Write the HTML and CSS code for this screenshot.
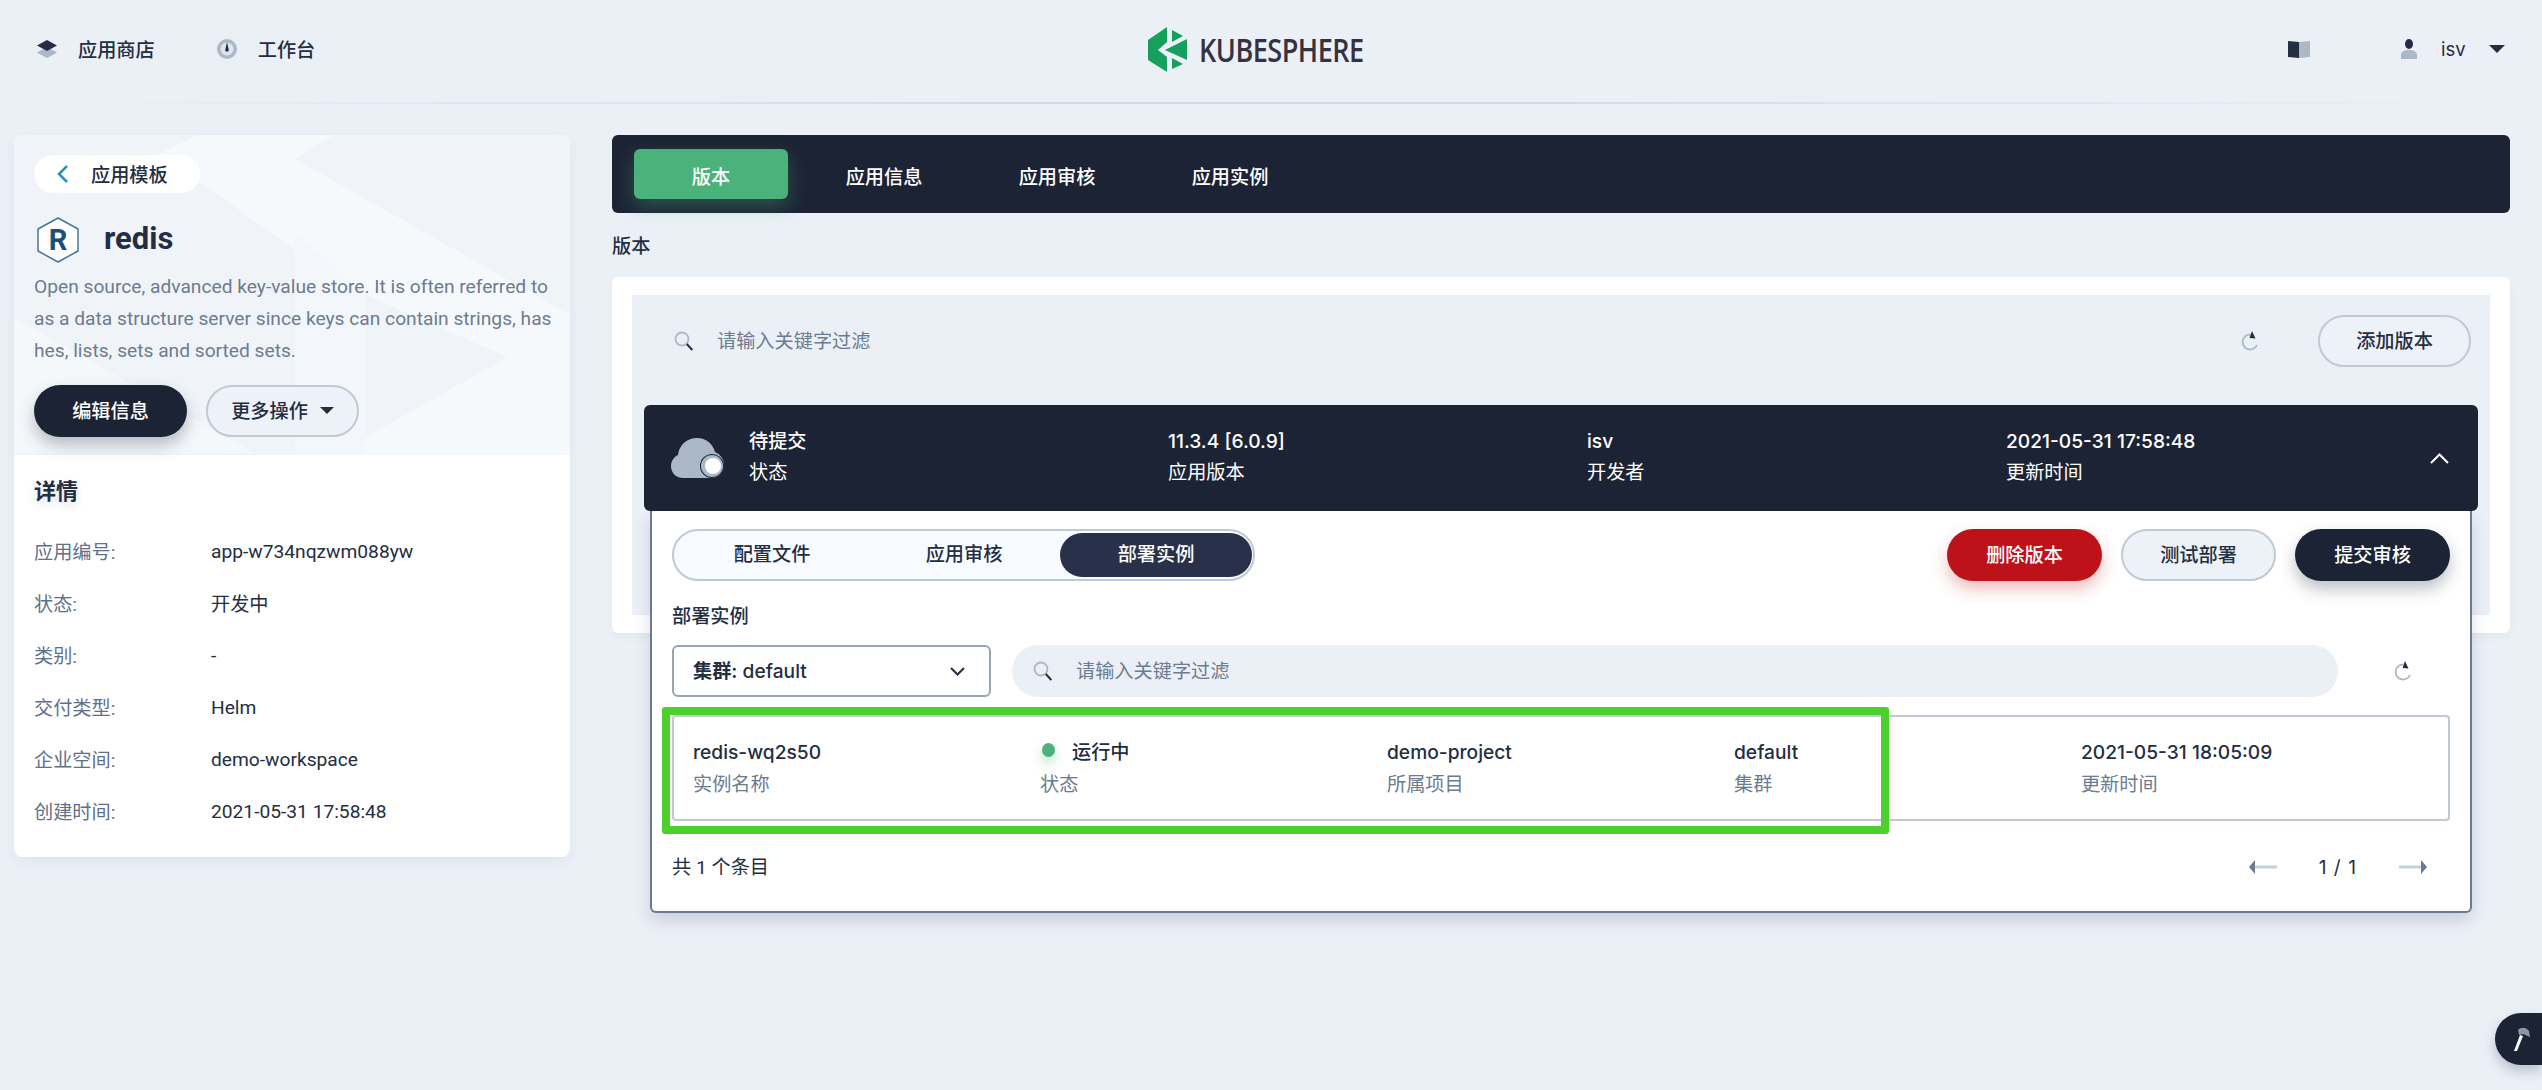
FILE: index.html
```html
<!DOCTYPE html>
<html lang="zh-CN">
<head>
    <meta charset="UTF-8">
    <title>KubeSphere - redis</title>
    <link rel="stylesheet" href="styles.css">
</head>
<body>
    <header class="topbar">
        <nav class="topnav">
            <a class="topnav-item">
                <svg class="icon-nav" viewBox="0 0 20 18"><path class="duo" d="M10 7l10 5.500L10 18 0 12.500z"/><path class="dark" d="M10 0l10 5.500L10 11 0 5.500z"/></svg>
                应用商店
            </a>
            <a class="topnav-item">
                <svg class="icon-nav" viewBox="0 0 20 20"><circle class="duo" cx="10" cy="10" r="10"/><circle cx="10" cy="10" r="6.500" fill="#dfe5ed"/><path class="dark" d="M10 3l1.800 8a1.800 1.800 0 1 1-3.600 0z"/></svg>
                工作台
            </a>
        </nav>
        <div class="logo">
            <svg class="logo-mark" viewBox="0 0 39 45"><path d="M19 0L0 13v20l19 12V30l-9-7 9-8z"/><path d="M24 3l11 6-11 6z"/><path d="M39 12L17 23l22 10z"/><path d="M24 31l11 6-11 5z"/></svg>
            <span class="logo-text">KUBESPHERE</span>
        </div>
        <div class="topbar-right">
            <svg class="icon-book" viewBox="0 0 22 17"><path class="dark" d="M0 0l11 1v16L0 16z"/><path class="duo" d="M11 1l11-1v16l-11 1z"/></svg>
            <svg class="icon-user" viewBox="0 0 16 20"><path class="duo" d="M0 20v-4c0-3 3-5 8-5s8 2 8 5v4z"/><ellipse class="dark" cx="8" cy="5" rx="4" ry="5"/></svg>
            <span class="username">isv</span>
            <span class="caret"></span>
        </div>
    </header>

    <main class="layout">
        <aside class="sidebar">
            <section class="hero">
                <svg class="hero-bg" viewBox="0 0 556 320" preserveAspectRatio="none">
                    <path d="M184 0H320L281 24 556 180V320H352V160L281 115 186 47 100 40z" fill="#f6f9fc"/>
                    <path d="M281 98V320H352V160z" fill="#f3f6fa"/>
                    <path d="M352 160L494 222 352 302z" fill="#f0f4f9"/>
                    <path d="M0 183L241 318H0z" fill="#f5f8fb"/>
                </svg>
                <a class="back-pill">
                    <svg class="icon-back" viewBox="0 0 12 20"><path d="M10 2L2 10l8 8" fill="none" stroke="#2a8fc7" stroke-width="2.500"/></svg>
                    应用模板
                </a>
                <div class="app-title">
                    <span class="hex-logo">
                        <svg viewBox="0 0 44 46"><path d="M22 1l20 11v22L22 45 2 34V12z" fill="#fff" stroke="#47759c" stroke-width="1.500" stroke-linejoin="round"/></svg>
                        <b>R</b>
                    </span>
                    <h1>redis</h1>
                </div>
                <p class="app-desc">Open source, advanced key-value store. It is often referred to as a data structure server since keys can contain strings, hashes, lists, sets and sorted sets.</p>
                <div class="hero-actions">
                    <button class="btn btn-dark">编辑信息</button>
                    <button class="btn btn-light">更多操作<span class="caret caret-small"></span></button>
                </div>
            </section>
            <section class="details">
                <h2>详情</h2>
                <dl class="detail-list">
                    <div><dt>应用编号:</dt><dd>app-w734nqzwm088yw</dd></div>
                    <div><dt>状态:</dt><dd>开发中</dd></div>
                    <div><dt>类别:</dt><dd>-</dd></div>
                    <div><dt>交付类型:</dt><dd>Helm</dd></div>
                    <div><dt>企业空间:</dt><dd>demo-workspace</dd></div>
                    <div><dt>创建时间:</dt><dd>2021-05-31 17:58:48</dd></div>
                </dl>
            </section>
        </aside>

        <div class="content">
            <nav class="tabs">
                <a class="tab active">版本</a>
                <a class="tab">应用信息</a>
                <a class="tab">应用审核</a>
                <a class="tab">应用实例</a>
            </nav>
            <div class="section-title">版本</div>
            <section class="versions-card">
                <div class="versions-inner">
                    <div class="toolbar">
                        <svg class="icon-search" viewBox="0 0 20 20"><circle cx="8" cy="8" r="6.500" fill="none" stroke="#abb8c6" stroke-width="1.800"/><path d="M12.800 13l5.500 6" stroke="#242e42" stroke-width="2"/></svg>
                        <span class="placeholder">请输入关键字过滤</span>
                        <svg class="icon-refresh" viewBox="0 0 18 20"><path d="M9.500 3.500A7.500 7.500 0 1 0 16 14" fill="none" stroke="#abb8c6" stroke-width="1.800"/><path d="M11 0l3.500 7.500-6-.5z" fill="#242e42"/></svg>
                        <button class="btn btn-light">添加版本</button>
                    </div>

                    <div class="version-row">
                        <svg class="icon-cloud" viewBox="0 0 53 40"><path d="M12 40C5 40 0 35 0 28c0-5 3-9 7-11C8 7 16 0 26 0c9 0 16 6 18 14 5 2 9 7 9 13 0 7-5 13-12 13z" fill="#abb8c6"/><circle cx="41" cy="28" r="12" fill="#1c2334"/><circle cx="41" cy="28" r="11" fill="#abb8c6"/><circle cx="42" cy="28" r="8" fill="#fff"/></svg>
                        <div class="version-cols">
                            <div><div class="cell-main">待提交</div><div class="cell-sub">状态</div></div>
                            <div><div class="cell-main">11.3.4 [6.0.9]</div><div class="cell-sub">应用版本</div></div>
                            <div><div class="cell-main">isv</div><div class="cell-sub">开发者</div></div>
                            <div><div class="cell-main">2021-05-31 17:58:48</div><div class="cell-sub">更新时间</div></div>
                        </div>
                        <svg class="icon-chevron-up" viewBox="0 0 19 11"><path d="M1 10l8.500-8.500L18 10" fill="none" stroke="#fff" stroke-width="2"/></svg>
                    </div>

                    <div class="version-panel">
                        <div class="panel-head">
                            <div class="pill-tabs">
                                <a class="pill-tab">配置文件</a>
                                <a class="pill-tab">应用审核</a>
                                <a class="pill-tab active">部署实例</a>
                            </div>
                            <div class="panel-actions">
                                <button class="btn btn-danger">删除版本</button>
                                <button class="btn btn-light">测试部署</button>
                                <button class="btn btn-dark">提交审核</button>
                            </div>
                        </div>
                        <div class="panel-title">部署实例</div>
                        <div class="filter-row">
                            <div class="select">
                                <span><b>集群:</b> default</span>
                                <svg class="icon-chevron" viewBox="0 0 15 9"><path d="M1 1l6.500 6.500L14 1" fill="none" stroke="#242e42" stroke-width="2"/></svg>
                            </div>
                            <div class="search">
                                <svg class="icon-search" viewBox="0 0 20 20"><circle cx="8" cy="8" r="6.500" fill="none" stroke="#abb8c6" stroke-width="1.800"/><path d="M12.800 13l5.500 6" stroke="#242e42" stroke-width="2"/></svg>
                                <span class="placeholder">请输入关键字过滤</span>
                            </div>
                            <svg class="icon-refresh icon-refresh-panel" viewBox="0 0 18 20"><path d="M9.500 3.500A7.500 7.500 0 1 0 16 14" fill="none" stroke="#abb8c6" stroke-width="1.800"/><path d="M11 0l3.500 7.500-6-.5z" fill="#242e42"/></svg>
                        </div>
                        <div class="instance-row">
                            <div class="instance-cols">
                                <div><div class="cell-main">redis-wq2s50</div><div class="cell-sub">实例名称</div></div>
                                <div><div class="cell-main status"><i class="dot"></i>运行中</div><div class="cell-sub">状态</div></div>
                                <div><div class="cell-main">demo-project</div><div class="cell-sub">所属项目</div></div>
                                <div><div class="cell-main">default</div><div class="cell-sub">集群</div></div>
                                <div><div class="cell-main">2021-05-31 18:05:09</div><div class="cell-sub">更新时间</div></div>
                            </div>
                            <div class="highlight-box"></div>
                        </div>
                        <div class="panel-foot">
                            <span class="foot-count">共 1 个条目</span>
                            <div class="pager">
                                <svg class="icon-arrow" viewBox="0 0 28 14"><rect x="6" y="5.500" width="22" height="3" fill="#c7d0da"/><path d="M0 7l6-7v14z" fill="#6b7a8c"/></svg>
                                <span class="pager-text">1 / 1</span>
                                <svg class="icon-arrow" viewBox="0 0 28 14"><rect x="0" y="5.500" width="22" height="3" fill="#c7d0da"/><path d="M28 7l-6-7v14z" fill="#6b7a8c"/></svg>
                            </div>
                        </div>
                    </div>
                </div>
            </section>
        </div>
    </main>

    <div class="tool-fab">
        <svg viewBox="0 0 18 24"><path d="M8 8L2 24h3l6-15z" fill="#fff"/><path d="M6 3c3-3 8-3 11 1l1 6-7-3-4 1z" fill="#8b97a6"/></svg>
    </div>
</body>
</html>
```

FILE: styles.css
```css
* {
    box-sizing: border-box;
}
body {
    margin: 0;
    min-height: 1090px;
    overflow: hidden;
    background-color: #ebf0f7;
    color: #242e42;
    font-family: Roboto, "Noto Sans CJK SC", sans-serif;
    font-size: 19.2px;
}
svg {
    display: block;
    flex: none;
}
.dark {
    fill: #242e42;
}
.duo {
    fill: #abb8c6;
}

/* top bar */
.topbar {
    display: flex;
    align-items: center;
    height: 104px;
    padding-bottom: 4px;
    border-bottom: 2px solid transparent;
    border-image: linear-gradient(90deg, #edf1f7, #d4dae4 40%, #d4dae4 60%, #edf1f7) 1;
}
.topnav {
    display: flex;
    width: 1148px;
    padding-left: 37px;
    gap: 62px;
}
.topnav-item {
    display: flex;
    align-items: center;
    gap: 21px;
    font-weight: 500;
}
.icon-nav {
    width: 20px;
    height: 20px;
}
.logo {
    display: flex;
    align-items: center;
    gap: 12px;
    width: 215px;
}
.logo-mark {
    width: 39px;
    height: 45px;
    fill: #16a05e;
}
.logo-text {
    font-family: "Open Sans", sans-serif;
    font-size: 33px;
    line-height: 45px;
    letter-spacing: -0.6px;
    color: #36323f;
    font-weight: 600;
    transform: scaleX(0.82);
    transform-origin: left center;
}
.topbar-right {
    display: flex;
    align-items: center;
    flex: 1;
    padding-left: 925px;
}
.icon-book {
    width: 22px;
    height: 17px;
}
.icon-user {
    width: 16px;
    height: 20px;
    margin-left: 91px;
}
.username {
    margin-left: 24px;
    font-family: Inter, sans-serif;
    font-size: 18.5px;
}
.caret {
    width: 0;
    height: 0;
    margin-left: 23px;
    border-left: 8px solid transparent;
    border-right: 8px solid transparent;
    border-top: 8px solid #242e42;
}
.caret-small {
    margin-left: 12px;
    border-left-width: 7px;
    border-right-width: 7px;
    border-top-width: 7px;
}

/* page layout */
.layout {
    display: flex;
    align-items: flex-start;
    gap: 42px;
    padding: 31px 32px 0 14px;
}

/* left column */
.sidebar {
    width: 556px;
    flex: none;
    border-radius: 8px;
    overflow: hidden;
    background-color: #fff;
    box-shadow: 0 4px 12px rgba(36, 46, 66, 0.06);
}
.hero {
    position: relative;
    height: 320px;
    padding: 20px;
    background-color: #f0f4f9;
}
.hero-bg {
    position: absolute;
    left: 0;
    top: 0;
    width: 100%;
    height: 100%;
}
.back-pill,
.app-title,
.app-desc,
.hero-actions {
    position: relative;
}
.back-pill {
    display: inline-flex;
    align-items: center;
    gap: 22px;
    width: 166px;
    height: 38px;
    padding-left: 23px;
    border-radius: 19px;
    background-color: #fff;
    font-weight: 500;
    vertical-align: top;
}
.icon-back {
    width: 12px;
    height: 20px;
}
.app-title {
    display: flex;
    align-items: center;
    gap: 24px;
    height: 46px;
    margin-top: 24px;
    padding-left: 2px;
}
.app-title h1 {
    margin: -2px 0 0;
    font-size: 31px;
    font-weight: 700;
    line-height: 46px;
}
.hex-logo {
    position: relative;
    width: 44px;
    height: 46px;
}
.hex-logo svg {
    width: 44px;
    height: 46px;
}
.hex-logo b {
    position: absolute;
    left: 0;
    right: 0;
    top: 0;
    text-align: center;
    font-size: 29px;
    line-height: 46px;
    color: #1c4f7c;
}
.app-desc {
    margin: 8px -10px 0 0;
    line-height: 32px;
    color: #6d7b90;
    word-break: break-all;
}
.hero-actions {
    display: flex;
    gap: 19px;
    margin-top: 18px;
}

/* buttons */
.btn {
    display: inline-flex;
    align-items: center;
    justify-content: center;
    width: 153px;
    height: 52px;
    padding: 0 0 2px;
    border: 2px solid transparent;
    border-radius: 26px;
    font: inherit;
    font-weight: 500;
}
.btn-dark {
    background-color: #1c2334;
    color: #fff;
    box-shadow: 0 8px 16px rgba(36, 46, 66, 0.3);
}
.btn-light {
    background-color: #edf1f8;
    border-color: #c1c9d5;
    color: #242e42;
}
.btn-danger {
    background-color: #bd1219;
    color: #fff;
    box-shadow: 0 8px 16px rgba(202, 38, 38, 0.3);
}

/* details */
.details {
    padding: 21px 20px 20px;
}
.details h2 {
    margin: 0;
    font-size: 22px;
    font-weight: 600;
    line-height: 32px;
    text-shadow: 0 4px 8px rgba(36, 46, 66, 0.15);
}
.detail-list {
    margin: 17px 0 0;
}
.detail-list div {
    display: flex;
    align-items: center;
    height: 52px;
}
.detail-list dt {
    width: 177px;
    color: #5f708a;
}
.detail-list dd {
    margin: 0;
}

/* right column */
.content {
    width: 1898px;
    flex: none;
}
.tabs {
    display: flex;
    gap: 19px;
    height: 78px;
    padding: 14px 22px;
    border-radius: 6px;
    background-color: #1c2334;
}
.tab {
    width: 154px;
    height: 50px;
    padding-top: 4px;
    border-radius: 6px;
    color: #fff;
    font-weight: 500;
    line-height: 50px;
    text-align: center;
}
.tab.active {
    background-color: #4ab27a;
    box-shadow: 0 8px 20px rgba(74, 178, 122, 0.35);
}
.section-title {
    height: 32px;
    margin-top: 18px;
    line-height: 32px;
    font-weight: 500;
}
.versions-card {
    height: 356px;
    margin-top: 14px;
    padding: 18px 20px;
    border-radius: 6px;
    background-color: #fff;
    box-shadow: 0 4px 8px rgba(36, 46, 66, 0.04);
}
.versions-inner {
    height: 320px;
    background-color: #ebf0f7;
}
.toolbar {
    display: flex;
    align-items: center;
    height: 110px;
    padding: 20px 19px 38px 42px;
}
.icon-search {
    width: 20px;
    height: 20px;
}
.placeholder {
    margin-left: 23px;
    padding-bottom: 2px;
    color: #6d7b90;
}
.icon-refresh {
    width: 18px;
    height: 20px;
    margin-left: auto;
    margin-right: 59px;
}
.version-row {
    display: flex;
    align-items: center;
    height: 106px;
    margin: 0 12px;
    padding-left: 27px;
    border-radius: 6px;
    background-color: #1c2334;
    color: #fff;
    position: relative;
}
.icon-cloud {
    width: 53px;
    height: 40px;
    margin-right: 25px;
}
.version-cols {
    display: grid;
    grid-template-columns: repeat(4, 419px);
}
.version-cols .cell-main {
    line-height: 29px;
}
.version-cols .cell-sub {
    line-height: 33px;
}
.cell-main {
    line-height: 34px;
    font-family: Inter, "Noto Sans CJK SC", sans-serif;
    font-weight: 500;
}
.cell-sub {
    line-height: 32px;
    color: #6d7b90;
}
.version-row .cell-sub {
    color: #fff;
}
.icon-chevron-up {
    width: 19px;
    height: 11px;
    margin-left: 5px;
}

/* opened version */
.version-panel {
    position: relative;
    height: 402px;
    margin: 0 18px;
    padding: 18px 20px 0;
    border: 2px solid #6b7a90;
    border-top: 0;
    border-radius: 0 0 6px 6px;
    background-color: #fff;
    box-shadow: 0 8px 16px rgba(36, 46, 66, 0.16);
}
.panel-head {
    display: flex;
    align-items: center;
    justify-content: space-between;
}
.pill-tabs {
    display: flex;
    height: 52px;
    padding: 2px 1px 2px 2px;
    border: 2px solid #c1c9d5;
    border-radius: 26px;
    background-color: #f8fbff;
}
.pill-tab {
    width: 192px;
    height: 44px;
    border-radius: 22px;
    font-weight: 500;
    line-height: 44px;
    text-align: center;
}
.pill-tab.active {
    background-color: #283149;
    color: #fff;
}
.panel-actions {
    display: flex;
    gap: 19px;
}
.panel-actions .btn {
    width: 155px;
}
.panel-title {
    height: 32px;
    margin-top: 20px;
    font-weight: 500;
    line-height: 32px;
}
.filter-row {
    display: flex;
    align-items: center;
    margin-top: 12px;
}
.select {
    display: flex;
    align-items: center;
    justify-content: space-between;
    width: 319px;
    height: 52px;
    padding: 0 24px 2px 19px;
    border: 2px solid #99a4b2;
    border-radius: 6px;
    font-family: Inter, "Noto Sans CJK SC", sans-serif;
    font-weight: 500;
}
.select b {
    font-weight: 600;
}
.icon-chevron {
    width: 15px;
    height: 9px;
    margin-top: 2px;
}
.search {
    display: flex;
    align-items: center;
    flex: 1;
    height: 52px;
    margin-left: 21px;
    padding-left: 21px;
    border-radius: 26px;
    background-color: #ebf0f7;
}
.icon-refresh-panel {
    margin: 0 38px 0 56px;
}
.instance-row {
    position: relative;
    height: 106px;
    margin-top: 18px;
    padding: 18px 0 0 19px;
    border: 2px solid #c1c9d5;
    border-radius: 4px;
}
.instance-cols {
    display: grid;
    grid-template-columns: repeat(5, 347px);
}
.status {
    display: flex;
    align-items: center;
}
.dot {
    width: 13px;
    height: 14px;
    margin: -4px 17px 0 2px;
    border-radius: 50%;
    background-color: #4ab27a;
    box-shadow: 0 6px 12px rgba(74, 178, 122, 0.4);
}
.highlight-box {
    position: absolute;
    left: -12px;
    top: -10px;
    width: 1227px;
    height: 127px;
    border: 8px solid #4bd02c;
    border-radius: 3px;
}
.panel-foot {
    display: flex;
    align-items: center;
    justify-content: space-between;
    height: 32px;
    margin-top: 30px;
}
.foot-count {
    padding-bottom: 2px;
}
.pager {
    display: flex;
    align-items: center;
    margin-right: 23px;
}
.icon-arrow {
    width: 28px;
    height: 14px;
}
.pager-text {
    margin: 0 42px;
    font-family: Inter, sans-serif;
    letter-spacing: 1px;
}

/* floating tools button */
.tool-fab {
    position: fixed;
    left: 2495px;
    top: 1013px;
    width: 47px;
    height: 52px;
    padding: 14px 0 0 17px;
    border-radius: 26px 0 0 26px;
    background-color: #1c2334;
    box-shadow: 0 6px 12px rgba(36, 46, 66, 0.25);
}
.tool-fab svg {
    width: 18px;
    height: 24px;
}
```
